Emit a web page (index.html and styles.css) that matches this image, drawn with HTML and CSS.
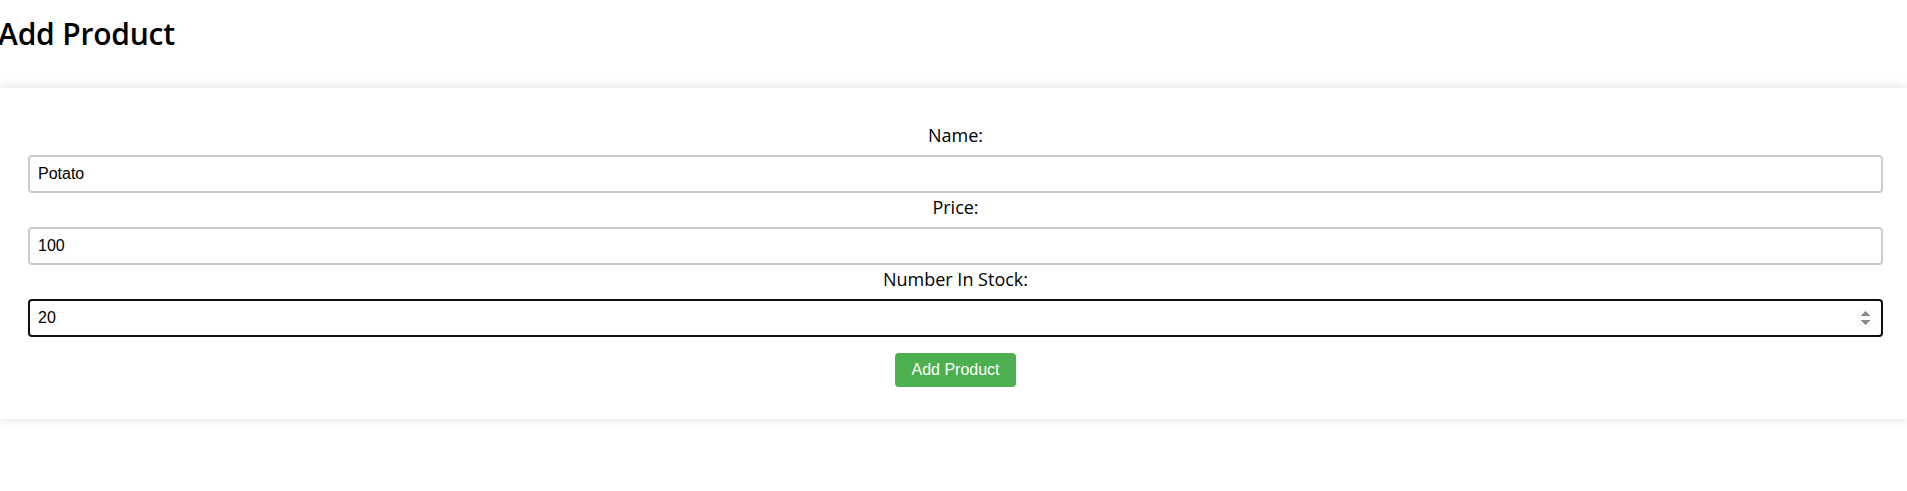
FILE: index.html
```html
<!DOCTYPE html>
<html lang="en">
<head>
<meta charset="utf-8">
<title>Add Product</title>
<link rel="stylesheet" href="styles.css">
</head>
<body>
<h1 class="page-title">Add Product</h1>
<div class="card">
  <form class="product-form">
    <label class="field-label" for="name">Name:</label>
    <input class="field-input" id="name" type="text" value="Potato">
    <label class="field-label" for="price">Price:</label>
    <input class="field-input" id="price" type="text" value="100">
    <label class="field-label" for="stock">Number In Stock:</label>
    <input class="field-input is-focused" id="stock" type="number" value="20">
    <div class="actions">
      <button class="submit-btn" type="button">Add Product</button>
    </div>
  </form>
</div>
</body>
</html>
```
FILE: styles.css
```css
html, body {
  margin: 0;
  padding: 0;
  background: #fff;
}
body {
  font-family: "Open Sans", "Noto Sans", sans-serif;
  color: #000;
}
.page-title {
  font-family: "Open Sans", sans-serif;
  font-weight: 600;
  font-size: 30px;
  line-height: 40px;
  margin: 14px 0 34px -2px;
  letter-spacing: -0.2px;
}
.card {
  display: block;
  background: #fff;
  box-shadow: 0 0 10px rgba(0, 0, 0, 0.14);
  padding: 33px 24px 32px 28px;
  margin-bottom: 20px;
}
.product-form {
  display: flex;
  flex-direction: column;
  align-items: stretch;
  margin: 0;
}
.field-label {
  display: block;
  text-align: center;
  font-size: 18px;
  line-height: 24px;
  margin: 2px 0 8px;
}
.field-input {
  box-sizing: border-box;
  width: 100%;
  height: 38px;
  font-family: "Liberation Sans", Arial, sans-serif;
  font-size: 16px;
  padding: 8px 8px;
  border: 2px solid #cccccc;
  border-radius: 4px;
  color: #000;
  background: #fff;
  outline: none;
  margin: 0;
}
.field-input.is-focused {
  border-color: #101010;
}
.field-input::-webkit-inner-spin-button {
  opacity: 1;
}
.actions {
  display: flex;
  justify-content: center;
  padding-top: 16px;
}
.submit-btn {
  box-sizing: border-box;
  height: 34px;
  background: #4caf50;
  color: #fff;
  border: none;
  border-radius: 4px;
  font-family: "Liberation Sans", Arial, sans-serif;
  font-size: 16px;
  padding: 0 16px;
  margin: 0;
  white-space: nowrap;
  cursor: pointer;
}
```
